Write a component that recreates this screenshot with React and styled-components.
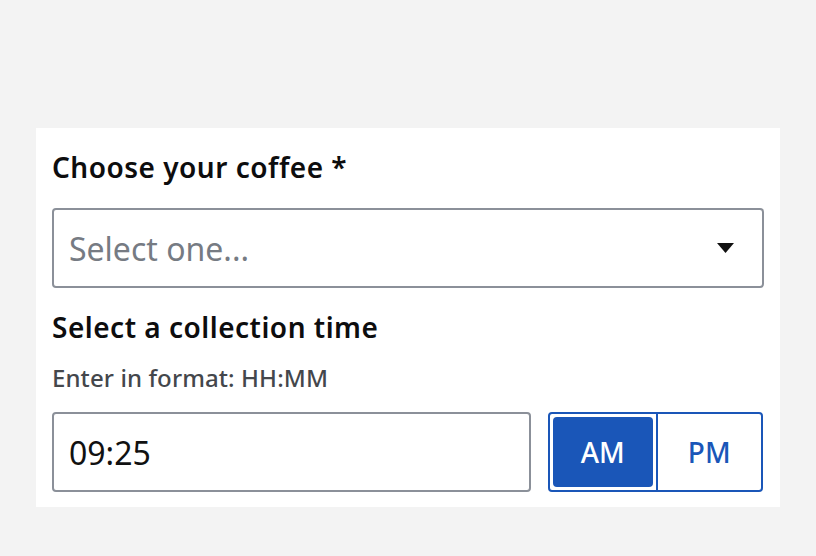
import React, { useState } from 'react';
import styled, { createGlobalStyle } from "styled-components";

const Global = createGlobalStyle`
    body
    {
        margin: 0;
        background: #f3f3f3;
        font-family: "Noto Sans", "Open Sans", sans-serif;
    }
`;

const Page = styled.div`
    padding: 128px 36px 0;
`;

const Card = styled.form`
    width: 744px;
    box-sizing: border-box;
    background: #ffffff;
    padding: 16px 16px 15px;
    display: flex;
    flex-direction: column;
`;

const Label = styled.label`
    font-size: 28px;
    font-weight: 600;
    line-height: 32px;
    letter-spacing: 0.5px;
    color: #0d0d0e;
    margin-top: ${p => p.$top}px;
`;

const Hint = styled.div`
    font-size: 24px;
    font-weight: 500;
    line-height: 24px;
    letter-spacing: 0.1px;
    color: #44474c;
    margin: 23px 0 22px;
`;

const SelectBox = styled.div`
    margin-top: 25px;
    height: 80px;
    box-sizing: border-box;
    border: 2px solid #8b9099;
    border-radius: 4px;
    display: flex;
    align-items: center;
    justify-content: space-between;
    padding: 0 28px 0 15px;
    cursor: pointer;
`;

const Placeholder = styled.span`
    font-size: 32px;
    color: #767b83;
`;

const Row = styled.div`
    display: flex;
    gap: 17px;
    height: 80px;
`;

const TimeInput = styled.input`
    width: 479px;
    height: 80px;
    box-sizing: border-box;
    border: 2px solid #8b9099;
    border-radius: 4px;
    padding: 0 15px;
    font-family: inherit;
    font-size: 32px;
    color: #111;
    outline: none;
`;

const Toggle = styled.div`
    width: 215px;
    box-sizing: border-box;
    border: 2px solid #1a56b8;
    border-radius: 4px;
    display: grid;
    grid-template-columns: 1fr 1fr;
`;

const Seg = styled.button`
    font-family: inherit;
    font-size: 28px;
    font-weight: 500;
    border: none;
    cursor: pointer;
    margin: ${p => p.$on ? '3px' : '0'};
    border-radius: ${p => p.$on ? '4px' : '0'};
    background: ${p => p.$on ? '#1a56b8' : 'transparent'};
    color: ${p => p.$on ? '#ffffff' : '#1a56b8'};
    & + &
    {
        border-left: 2px solid #1a56b8;
    }
`;

const Caret = () => (
    <svg width="17" height="10" viewBox="0 0 17 10">
        <path d="M0 0 H17 L8.5 10 Z" fill="#111" />
    </svg>
);

const App = () =>
{
    const [period, setPeriod] = useState('AM');

    return (
        <Page>
            <Global />
            <Card onSubmit={e => e.preventDefault()}>
                <Label $top={7}>Choose your coffee *</Label>
                <SelectBox>
                    <Placeholder>Select one...</Placeholder>
                    <Caret />
                </SelectBox>
                <Label $top={23}>Select a collection time</Label>
                <Hint>Enter in format: HH:MM</Hint>
                <Row>
                    <TimeInput defaultValue="09:25" />
                    <Toggle>
                        {['AM', 'PM'].map(x => (
                            <Seg type="button" key={x} $on={period === x} onClick={() => setPeriod(x)}>
                                {x}
                            </Seg>
                        ))}
                    </Toggle>
                </Row>
            </Card>
        </Page>
    )
}

export default App
